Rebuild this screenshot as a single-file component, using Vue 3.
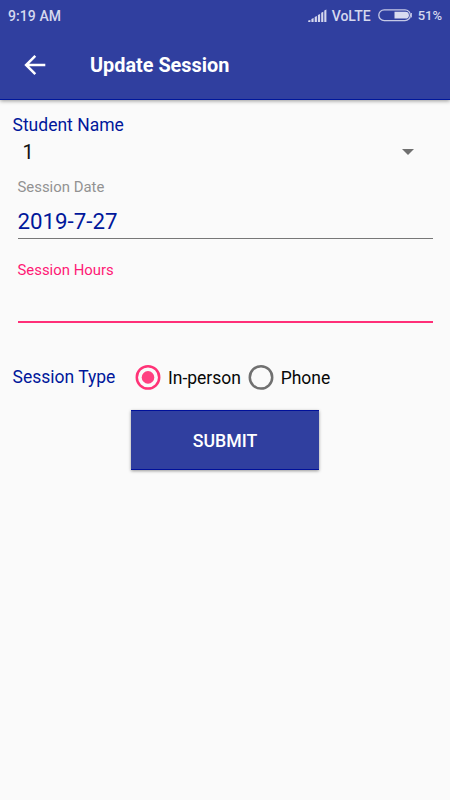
<script setup>
import { ref } from 'vue'

const student = ref('1')
const sessionDate = ref('2019-7-27')
const sessionType = ref('In-person')
const types = ['In-person', 'Phone']
</script>

<template>
  <div class="screen">
    <header class="top">
      <div class="status">
        <span class="clock">9:19 AM</span>
        <svg class="signal" width="20" height="14" viewBox="0 0 20 14">
          <path d="M0.2 13v-1.4l2.2-.6v2zM3.4 13v-3l2.2-1v4zM6.7 13V8l2.2-1v6zM9.9 13V5.9l2.2-1V13zM13.2 13V3.7l2.1-1V13zM16.3 13V1.6l2.1-1V13z" fill="#d5d8ee" />
        </svg>
        <span class="network">VoLTE</span>
        <svg class="battery" width="35" height="13" viewBox="0 0 35 13">
          <rect x="0.8" y="0.8" width="31.6" height="10.8" rx="5.4" fill="none" stroke="#c5c9e6" stroke-width="1.3" />
          <path d="M16.5 2.8h11a3.4 3.4 0 0 1 0 6.8h-11z" fill="#d9dcf0" />
          <path d="M33.4 4v4.4" stroke="#c5c9e6" stroke-width="1" />
        </svg>
        <span class="percent">51%</span>
      </div>
      <div class="toolbar">
        <svg class="back" width="22" height="22" viewBox="0 0 22 22">
          <path d="M21.3 11H2.9M11.3 1.8L2.1 11l9.2 9.2" fill="none" stroke="#fff" stroke-width="2.5" />
        </svg>
        <h1 class="title">Update Session</h1>
      </div>
    </header>

    <main class="form">
      <div class="label student-label"><span>Student Name</span></div>
      <div class="select">
        <span>{{ student }}</span>
        <svg width="12" height="6" viewBox="0 0 12 6"><path d="M0 0h12L6 6z" fill="#707070" /></svg>
      </div>
      <div class="field date">
        <div class="caption">Session Date</div>
        <div class="value">{{ sessionDate }}</div>
      </div>
      <div class="field hours">
        <div class="caption">Session Hours</div>
        <div class="value"></div>
      </div>
      <div class="types">
        <div class="label type-label"><span>Session Type</span></div>
        <div v-for="t in types" :key="t" class="option" @click="sessionType = t">
          <svg width="26" height="26" viewBox="0 0 26 26" :class="{ on: sessionType === t }">
            <circle class="ring" cx="13" cy="13.4" r="11.2" />
            <circle v-if="sessionType === t" class="dot" cx="13" cy="13.4" r="6.3" />
          </svg>
          <span>{{ t }}</span>
        </div>
      </div>
      <button class="submit">SUBMIT</button>
    </main>
  </div>
</template>

<style>
body {
  background: #fafafa;
}
</style>

<style scoped>
.screen {
  width: 450px;
  height: 800px;
  overflow: hidden;
  background: #fafafa;
  font-family: Roboto, sans-serif;
  box-sizing: border-box;
}
.screen * {
  box-sizing: border-box;
}
.top {
  height: 100px;
  background: #303f9f;
  border-bottom: 1px solid #00179b;
  box-shadow: 0 1px 4px rgba(0, 0, 0, 0.4);
}
.status {
  height: 31px;
  display: flex;
  align-items: center;
  padding: 0 8px;
  color: #d5d8ee;
  font-weight: 500;
  font-size: 14px;
  line-height: 30px;
}
.clock {
  flex: 1;
  letter-spacing: 0.08px;
}
.clock,
.network {
  padding-top: 1px;
}
.signal {
  margin: 0 4px 0 0;
}
.network {
  margin-right: 7px;
}
.battery {
  margin-right: 5px;
}
.percent {
  font-size: 13px;
}
.toolbar {
  height: 68px;
  display: flex;
  align-items: center;
  padding-left: 24px;
}
.title {
  margin: 2px 0 0 44px;
  color: #fff;
  font-size: 19.85px;
  font-weight: 700;
  line-height: 24px;
}
.form {
  padding: 13px 12px 0;
  display: flex;
  flex-direction: column;
}
.label {
  padding-left: 0.5px;
  color: #00179b;
  font-size: 17.5px;
  line-height: 24px;
  white-space: nowrap;
}
.select {
  height: 28px;
  margin-top: 1px;
  padding: 0 24.5px 0 10.5px;
  display: flex;
  align-items: center;
  justify-content: space-between;
  color: #111;
  font-size: 20px;
  line-height: 28px;
}
.field {
  margin: 0 5.5px;
}
.caption {
  font-size: 14.9px;
  line-height: 20px;
  color: #929292;
}
.date {
  margin-top: 11px;
}
.value {
  height: 42px;
  padding-top: 11px;
  border-bottom: 1px solid #777;
  color: #00179b;
  font-size: 22.3px;
  line-height: 27px;
}
.hours {
  margin-top: 21px;
}
.hours .caption {
  color: #ff1975;
}
.hours .value {
  height: 43px;
  border-bottom: 2px solid #ff2f78;
}
.types {
  height: 28px;
  margin-top: 40px;
  display: flex;
  align-items: center;
}
.type-label {
  width: 123px;
}
.option {
  display: flex;
  align-items: center;
  margin-right: 6.7px;
  color: #080808;
  font-size: 17.5px;
}
.option span {
  padding-top: 2px;
}
.option svg {
  margin-right: 7px;
}
.ring {
  fill: none;
  stroke: #707070;
  stroke-width: 2.5;
}
.on .ring {
  stroke: #ff3377;
}
.dot {
  fill: #ff4081;
}
.submit {
  align-self: center;
  width: 188px;
  height: 60px;
  margin-top: 19px;
  padding: 1px 0 0;
  border: 0 solid #00109a;
  border-width: 1px 0;
  background: #303f9f;
  box-shadow: 0 1px 3px rgba(0, 0, 0, 0.4);
  color: #fff;
  font: 500 17.7px/24px Roboto, sans-serif;
}
</style>
